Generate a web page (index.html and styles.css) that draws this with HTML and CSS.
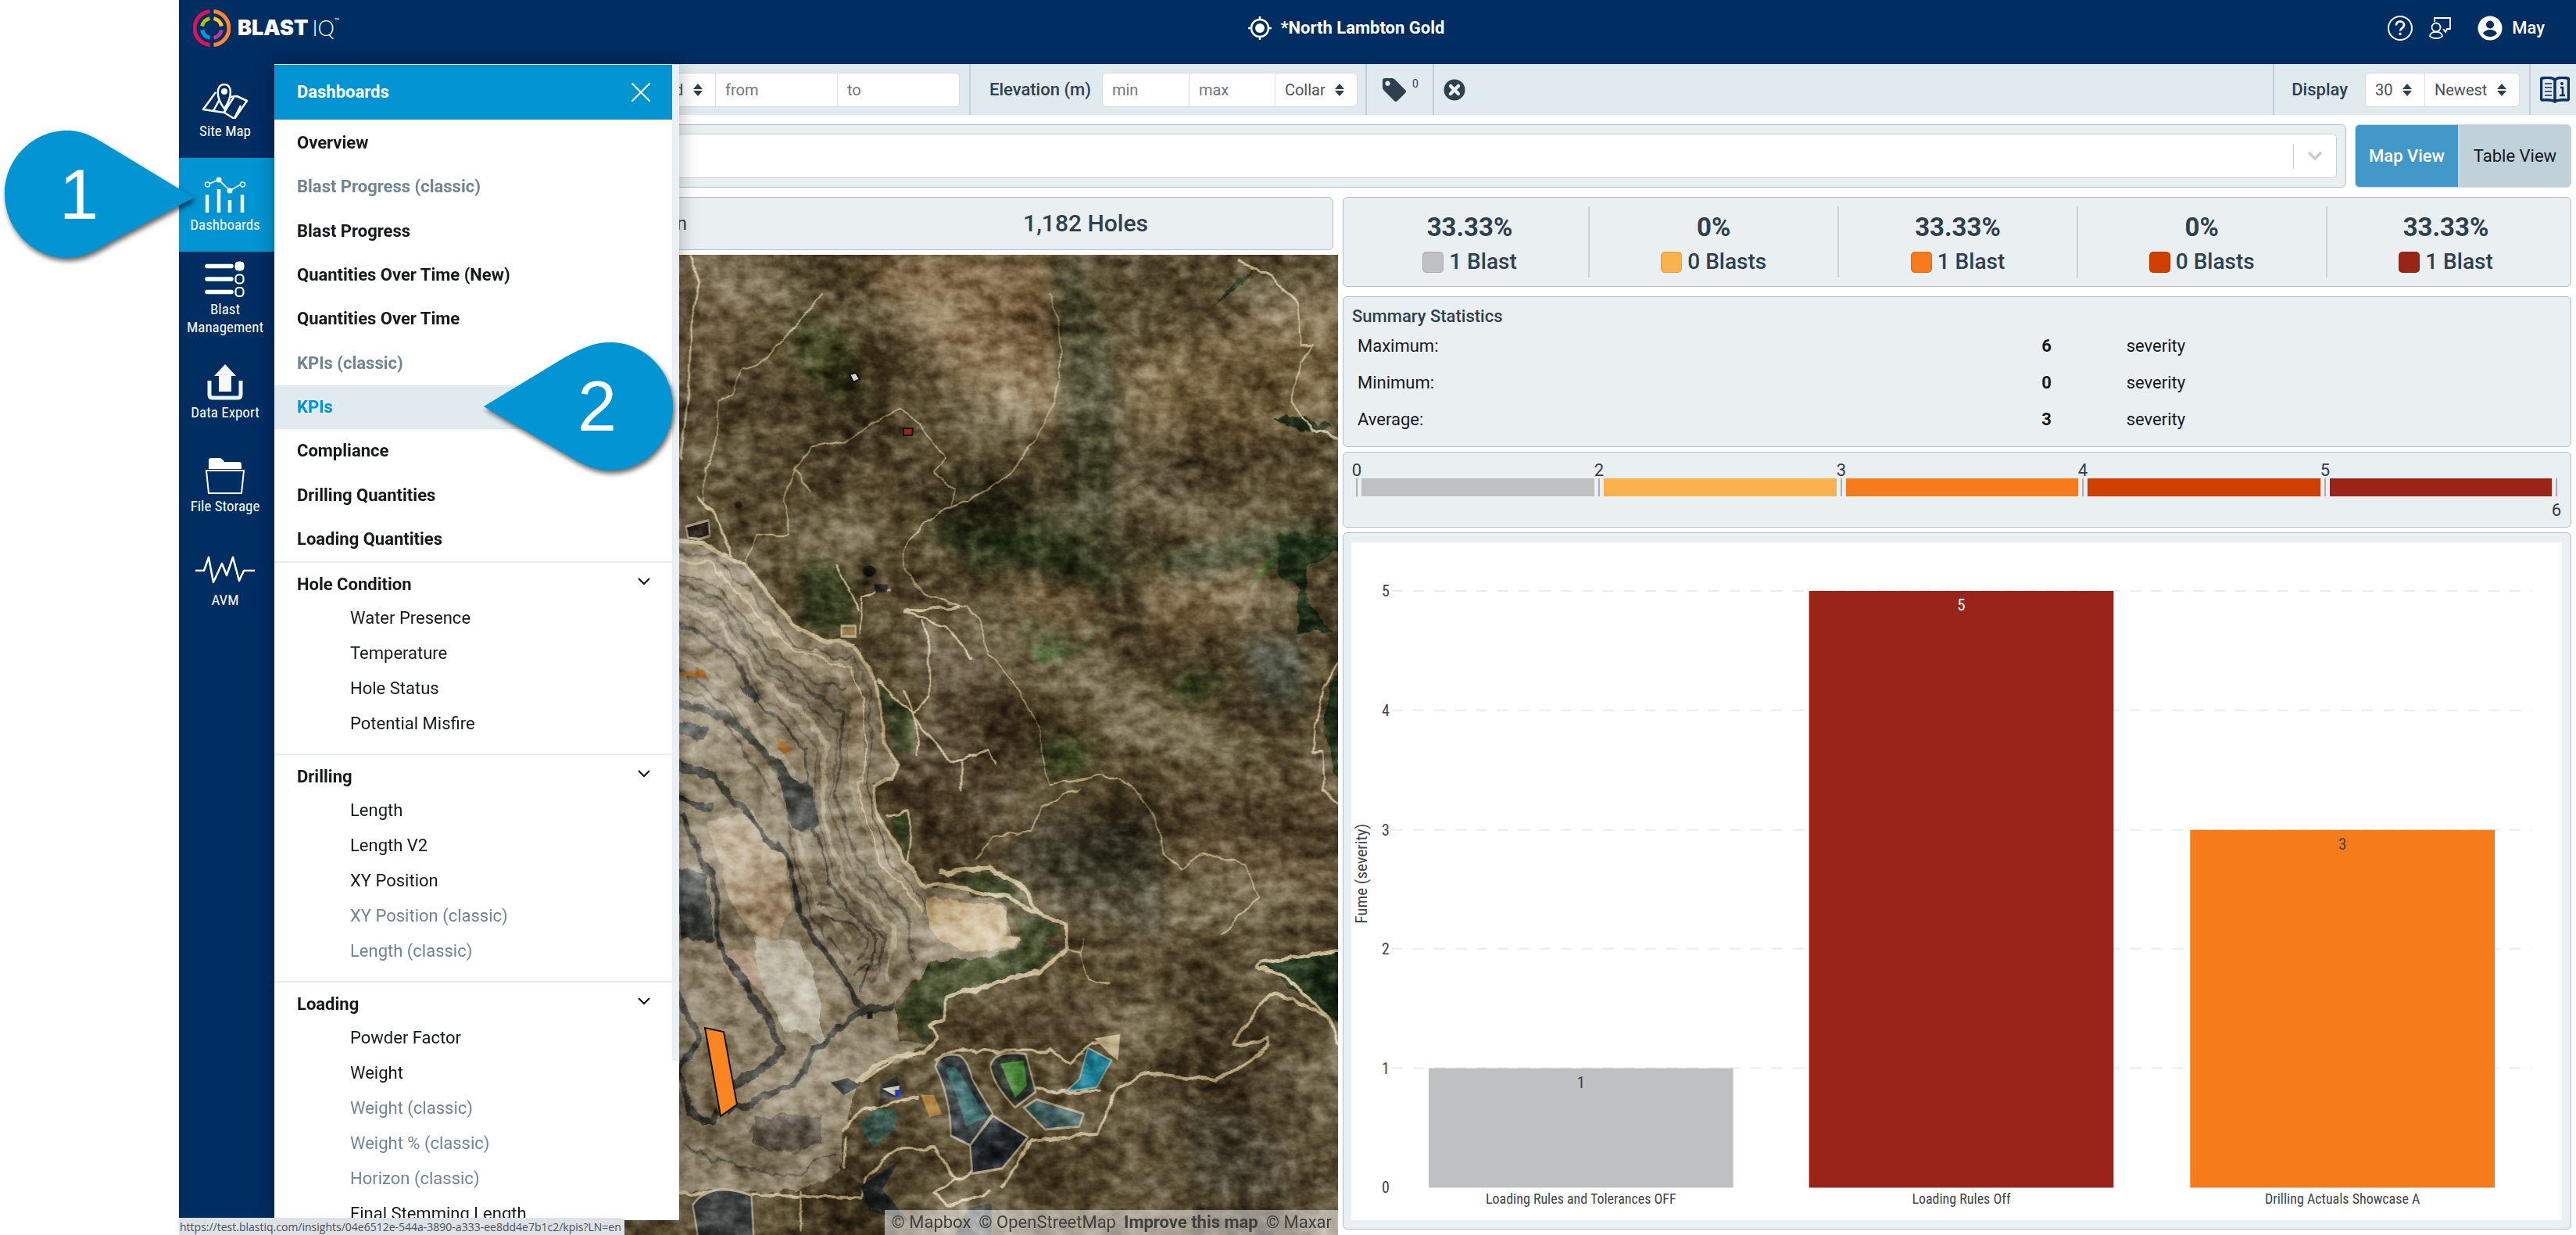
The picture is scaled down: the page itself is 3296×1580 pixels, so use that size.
FILE: index.html
```html
<!DOCTYPE html>
<html lang="en">
<head>
<meta charset="utf-8">
<title>BlastIQ – Dashboards</title>
<link rel="stylesheet" href="styles.css">
</head>
<body>
<div class="app">
  <header class="topbar">
    <a class="brand" href="#" aria-label="BlastIQ">
      <svg class="brand-mark" viewBox="0 0 48 48" fill="none">
        <g stroke-width="5">
          <path d="M21.500 2.600A21.500 21.500 0 0 0 21.500 45.400" stroke="#e3115c"/>
          <path d="M26.500 2.600A21.500 21.500 0 0 1 26.500 45.400" stroke="#f98432"/>
          <path d="M21.500 11.600A12.500 12.500 0 0 0 11.600 21.500" stroke="#b5c100"/>
          <path d="M26.500 11.600A12.500 12.500 0 0 1 36.400 21.500" stroke="#ffc425"/>
          <path d="M21.500 36.400A12.500 12.500 0 0 1 11.600 26.500" stroke="#0b9ad6"/>
          <path d="M26.500 36.400A12.500 12.500 0 0 0 36.400 26.500" stroke="#b9399f"/>
        </g>
      </svg>
      <span class="brand-name">BLAST</span><span class="brand-iq">IQ</span><sup class="brand-tm">™</sup>
    </a>
    <div class="site">
      <svg class="icon-30" viewBox="0 0 30 30" fill="none" stroke="#fff"><circle cx="15" cy="15" r="11" stroke-width="2.500"/><circle cx="15" cy="15" r="6" fill="#fff" stroke="none"/><path d="M15 0v5M15 25v5M0 15h5M25 15h5" stroke-width="2.500"/></svg>
      <span>*North Lambton Gold</span>
    </div>
    <div class="account">
      <button class="plain" aria-label="Help"><svg class="icon-34" viewBox="0 0 34 34" fill="none" stroke="#fff"><circle cx="17" cy="17" r="15" stroke-width="2"/><path d="M12 13.500c0-7 10-6.500 10-.5 0 4-5 4-5 7.500" stroke-width="2.800"/><circle cx="17" cy="24.500" r="1.300" fill="#fff"/></svg></button>
      <button class="plain" aria-label="Feedback"><svg class="icon-28" viewBox="0 0 28 28" fill="none" stroke="#fff" stroke-width="1.800"><path d="M7 6V1h20v14h-4l-2 4-3-4"/><circle cx="9" cy="13" r="5.500"/><path d="M1 24c1-7 15-7 16 0-3 4-13 4-16 0Z"/></svg></button>
      <button class="plain user"><svg class="icon-32" viewBox="0 0 32 32"><circle cx="16" cy="16" r="15.500" fill="#fff"/><circle cx="16" cy="11.500" r="5" fill="#002d62"/><path d="M7 22.500c3-6 15-6 18 0-4 6-14 6-18 0Z" fill="#002d62"/></svg><span>May</span></button>
    </div>
  </header>

  <div class="body">
    <nav class="rail" aria-label="Main">
      <a href="#"><svg class="rail-icon" viewBox="0 0 60 46" fill="none" stroke="#fff" stroke-width="2.500" stroke-linejoin="round"><path d="M18 12 2 34l13 2 14 2 13 8 16-23-13-6-8 1M15 36l8-15M29 38l4-7M29 33c-12-16-10-31 0-31s11 15 0 31ZM42 45l8-16M29 37l13-20"/><circle cx="29" cy="11" r="4" fill="#fff" stroke="none"/></svg><span>Site Map</span></a>
      <a href="#" class="current"><svg class="rail-icon" viewBox="0 0 60 46" fill="none" stroke="#eef5f9"><path d="M7 23v23M22 16v30M36 30v16M52 23v23" stroke-width="4.500"/><path d="M10 9 22 4l14 14 14-8" stroke-width="1.800"/><circle cx="7.500" cy="10" r="3" stroke-width="1.500"/><circle cx="52.500" cy="10" r="3" stroke-width="1.500"/><circle cx="22" cy="4" r="3.500" fill="#fff" stroke="none"/><circle cx="36" cy="18" r="3.500" fill="#fff" stroke="none"/></svg><span>Dashboards</span></a>
      <a href="#"><svg class="rail-icon" viewBox="0 0 60 46" fill="none" stroke="#fff"><path d="M7 6.500h31M7 23h31M7 39.500h31" stroke-width="5.500" stroke-linecap="round"/><rect x="43" y="1" width="11" height="11" rx="4" fill="#fff"/><rect x="43.500" y="17.500" width="10" height="11" rx="4" stroke-width="2.200"/><rect x="43.500" y="34" width="10" height="11" rx="4" stroke-width="2.200"/></svg><span>Blast Management</span></a>
      <a href="#"><svg class="rail-icon" viewBox="0 0 60 46" fill="none"><path d="M10 21v18q0 4 4 4h32q4 0 4-4V21" stroke="#eef5f9" stroke-width="5"/><path d="m30 0 14 15h-6v20H22V15h-6Z" fill="#f3f8fa"/></svg><span>Data Export</span></a>
      <a href="#"><svg class="rail-icon" viewBox="0 0 60 46" fill="none"><path d="M9 14V3q0-3 3-3h11q3 0 6 5h19q3 0 3 3v6Z" fill="#fff"/><path d="M6 16h48l-3 29H9Z" stroke="#fff" stroke-width="2"/></svg><span>File Storage</span></a>
      <a href="#"><svg class="rail-wave" viewBox="0 0 76 46" fill="none" stroke="#fff" stroke-width="2.500" stroke-linejoin="round"><path d="M0 24h11L17 7l6 32L34 15l6 15L48 7l8 30 6-13h14"/></svg><span>AVM</span></a>
    </nav>

    <main class="content">
      <form class="toolbar">
        <div class="tool dates">
          <div class="fields">
            <div class="pick"><select aria-label="Date type"><option>Fired</option></select><svg class="sort" viewBox="0 0 12 16"><path d="m6 0 6 7H0ZM6 16 0 9h12Z"/></svg></div>
            <input class="date" aria-label="from" placeholder="from"><input class="date" aria-label="to" placeholder="to">
          </div>
        </div>
        <div class="tool">
          <label class="tool-label" for="elevation-min">Elevation (m)</label>
          <div class="fields">
            <input class="level" id="elevation-min" placeholder="min"><input class="level" aria-label="max" placeholder="max">
            <div class="pick"><select aria-label="Elevation reference"><option>Collar</option></select><svg class="sort" viewBox="0 0 12 16"><path d="m6 0 6 7H0ZM6 16 0 9h12Z"/></svg></div>
          </div>
        </div>
        <div class="tool tags"><button type="button" class="plain tag" aria-label="Tags"><svg class="icon-30" viewBox="0 0 30 30"><path fill-rule="evenodd" d="M0 3q0-3 3-3h9q2 0 4 2l13 13q2 2 0 4L19 29q-2 2-4 0L2 16q-2-2-2-4ZM6.500 3.500a3.200 3.200 0 1 0 .1 0Z" fill="#2e404d"/></svg><span class="count">0</span></button></div>
        <div class="tool clear"><button type="button" class="plain" aria-label="Clear filters"><svg class="icon-28" viewBox="0 0 28 28"><circle cx="14" cy="14" r="13.500" fill="#2e404d"/><path d="m9 9 10 10M19 9 9 19" stroke="#e9f0f3" stroke-width="4.500" stroke-linecap="round"/></svg></button></div>
        <div class="tool display">
          <label class="tool-label" for="display-count">Display</label>
          <div class="fields">
            <div class="pick"><select id="display-count"><option>30</option></select><svg class="sort" viewBox="0 0 12 16"><path d="m6 0 6 7H0ZM6 16 0 9h12Z"/></svg></div>
            <div class="pick"><select aria-label="Order"><option>Newest</option></select><svg class="sort" viewBox="0 0 12 16"><path d="m6 0 6 7H0ZM6 16 0 9h12Z"/></svg></div>
          </div>
        </div>
        <div class="tool guide"><button type="button" class="plain" aria-label="Guide"><svg class="icon-book" viewBox="0 0 38 34" fill="none" stroke="#0a2f66"><path d="M19 4Q14 0 3 2 1.500 2 1.500 4v24q0 2 2 2 11-1 15.500 2 4.500-3 15.500-2 2 0 2-2V4q0-2-1.500-2Q24 0 19 4v27" stroke-width="3.500"/><path d="M6 9h9M6 14h9M6 19h9M6 24h9" stroke-width="1.500"/><path d="M26 14h3v10M25 24h7" stroke-width="2.500"/><circle cx="28" cy="9" r="2" fill="#0a2f66" stroke="none"/></svg></button></div>
      </form>

      <div class="filter-row">
        <div class="card filter">
          <div class="combo"><input aria-label="Filter blasts"><button class="plain combo-open" aria-label="Open list"><svg class="icon-18" viewBox="0 0 18 12" fill="none" stroke="#ccc" stroke-width="3.500" stroke-linecap="round"><path d="m2 2 7 7 7-7"/></svg></button></div>
        </div>
        <div class="views"><button class="view on">Map View</button><button class="view">Table View</button></div>
      </div>

      <div class="columns">
        <section class="map-col">
          <div class="card totals"><span class="metric">Fume comparison</span><strong class="holes">1,182 Holes</strong></div>
          <div class="map">
            <svg class="map-art" viewBox="351 326 1361 1254" preserveAspectRatio="xMaxYMin slice" aria-hidden="true">
              <defs>
                <filter id="ground" class="noise" x="0" y="0" width="100%" height="100%"><feTurbulence type="fractalNoise" baseFrequency=".006 .009" numOctaves="6" seed="8"/><feColorMatrix values="1.300 .5 0 0 -.4  1.300 .5 0 0 -.4  1.300 .5 0 0 -.4  0 0 0 0 1"/></filter>
                <filter id="grain" class="noise" x="0" y="0" width="100%" height="100%"><feTurbulence type="fractalNoise" baseFrequency=".05 .07" numOctaves="4" seed="23"/><feColorMatrix values="1.200 .6 0 0 -.4  1.200 .6 0 0 -.4  1.200 .6 0 0 -.4  0 0 0 0 1"/></filter>
                <filter id="rough" x="-5%" y="-5%" width="110%" height="110%"><feTurbulence type="fractalNoise" baseFrequency=".025" numOctaves="4" seed="5"/><feDisplacementMap in="SourceGraphic" scale="24" xChannelSelector="R" yChannelSelector="G"/></filter>
                <filter id="wind" x="-5%" y="-5%" width="110%" height="110%"><feTurbulence type="fractalNoise" baseFrequency=".03" numOctaves="2" seed="11"/><feDisplacementMap in="SourceGraphic" scale="14" xChannelSelector="R" yChannelSelector="G"/></filter>
                <filter id="soft" x="-20%" y="-20%" width="140%" height="140%"><feGaussianBlur stdDeviation="18"/></filter>
              </defs>
              <rect x="351" y="326" width="1361" height="1254" fill="#594c31"/>
              <g transform="translate(860 320) scale(.5485 .8036)">
                <g filter="url(#soft)">
                  <path d="M400 0h480l160 180-120 120-250-90Z" fill="#806b46"/>
                  <path d="M10 10h250l-60 150-190 200Z" fill="#67593c"/>
                  <path d="M1040 180 1560 60v200l-200 50-280-20Z" fill="#786543"/>
                  <path d="M1040 320 1300 420 1200 440 1060 400Z" fill="#776a50"/>
                  <path d="M800 510 1020 560 960 600 780 560ZM1100 520 1400 480 1350 580 1120 640Z" fill="#7a6644"/>
                  <path d="M280 90 400 130 470 250 370 230 280 180Z" fill="#3b3e1f"/>
                  <path d="M880 0h60l100 180v260l100 60-300-20-250-70 100-60 220 50Z" fill="#46442b"/>
                  <path d="M560 430 900 440 1080 530 1000 540 700 500Z" fill="#2f381c"/>
                  <path d="M1060 500 1540 430 1560 480 1200 530Z" fill="#2c351b"/>
                  <path d="M300 490 430 520 420 610 310 600Z" fill="#414928"/>
                  <path d="M540 600 720 640 820 780 780 900 560 940 500 830 620 760Z" fill="#483a25"/>
                  <path d="M870 780 980 790 960 830 870 830ZM800 600 940 620 900 660ZM1200 670 1320 690 1160 720Z" fill="#3b4d24"/>
                  <path d="M1330 620 1470 620 1480 720 1380 730Z" fill="#494b3e"/>
                  <path d="M860 900 1130 900 1150 1100 900 1040 760 980Z" fill="#4a4431"/>
                  <path d="M1100 860 1560 850v180l-340-40Z" fill="#6a5a3c"/>
                  <path d="M1250 1180 1500 1260 1540 1550 1040 1550 1040 1400Z" fill="#594c31"/>
                  <path d="M640 1220 1100 1180 1000 1260 620 1260Z" fill="#463823"/>
                  <path d="M1200 1370 1350 1380 1460 1490 1230 1500Z" fill="#6b644f"/>
                </g>
                <g filter="url(#rough)">
                  <path d="M1420 450 1560 455V480L1480 500V560L1540 610H1450L1470 540 1410 510ZM1370 1135 1560 1115V1230L1440 1170ZM1400 270 1450 262 1540 280 1470 290ZM1260 90 1330 40 1360 30 1300 70 1270 85ZM1540 680 1560 670V860L1520 760Z" fill="#1f2a13"/>
                  <path d="M1380 500 1400 480 1400 510 1330 540ZM830 630 930 640 1010 580 950 640 850 655Z" fill="#2f5f25" opacity=".5"/>
                  <path d="M590 1140 830 1095 910 1110 850 1145 660 1185 630 1220 600 1260 520 1220ZM640 1000 760 990 830 1045ZM790 1050 910 1080 830 1120ZM500 900 555 905 550 970ZM480 690 560 740 570 800 520 800Z" fill="#3c4527"/>
                  <path d="M-700 455 10 462 70 466 170 500 240 560 300 605 350 622 420 628 460 665 480 700 495 780 525 820 515 840 470 852 475 890 540 970 590 1015 640 1010 780 1040 785 1085 812 1098 800 1112 700 1130 600 1135 520 1200 530 1260 600 1260 540 1285 440 1320 400 1400 390 1470 300 1500-700 1500Z" fill="#8f836b"/>
                  <g fill="none" stroke-linejoin="round">
                    <path d="M10 500 120 520 200 590 300 650 400 665 430 720 430 800 440 880 520 1000 580 1050" stroke="#bfb193" stroke-width="36" opacity=".5"/>
                    <path d="M10 530 120 560 220 650 340 710 400 740 380 860 430 970 550 1060 560 1130" stroke="#665e4d" stroke-width="7"/>
                    <path d="M10 560 110 590 200 680 320 750 360 790 350 900 400 1000 520 1080 500 1160" stroke="#afa389" stroke-width="9"/>
                    <path d="M10 575 120 615 200 700 315 770 340 800 335 905 385 1005 500 1090 470 1170" stroke="#746b59" stroke-width="5"/>
                    <path d="M10 590 130 640 200 720 310 790 320 900 370 1010 480 1100 440 1180" stroke="#595346" stroke-width="6"/>
                    <path d="M10 640 120 690 190 760 280 830 290 920 340 1040 420 1100" stroke="#a79c83" stroke-width="12"/>
                    <path d="M10 665 100 705 180 775 265 850 275 940 325 1060 410 1130M10 690 90 720 170 800 240 870" stroke="#675f4f" stroke-width="5"/>
                    <path d="M10 515 110 535 190 605 310 680 410 700M10 480 100 490 200 560 290 630 420 650 460 700 470 780 450 850 500 960 590 1040M10 545 115 575 210 665 330 730 385 765 365 880 415 985 540 1070" stroke="#716754" stroke-width="4"/>
                    <path d="M10 490 100 505 190 575 290 640 410 660 445 710 455 790 435 865 485 975 580 1045" stroke="#cfc1a3" stroke-width="4"/>
                    <path d="M340 1040 420 1050 500 1100 480 1140 420 1150M350 1060 420 1070 460 1105 430 1130M180 1400 240 1375 320 1380 350 1410 280 1440M30 1430 130 1450 260 1475 380 1440" stroke="#645c4b" stroke-width="4"/>
                    <path d="M10 720 110 740 210 790 280 850" stroke="#4b4b41" stroke-width="14"/>
                  </g>
                  <path d="M80 910 190 890 260 970 280 1050 230 1110 150 1060 110 980Z" fill="#b29f83"/>
                  <path d="M190 1090 300 1100 350 1200 350 1260 260 1240 200 1170Z" fill="#b8b29f"/>
                  <path d="M110 1120 180 1110 220 1180 140 1160Z" fill="#ae967f"/>
                  <path d="M250 840 330 850 340 920 280 920ZM10 750 90 760 80 780 10 770ZM10 980 80 990 100 1100 20 1100ZM160 690 210 710 190 725Z" fill="#454642"/>
                  <path d="M190 1380 350 1380 350 1420 250 1440 190 1415Z" fill="#62594c"/>
                  <path d="M590 1030 780 1045 780 1085 812 1098 790 1112 680 1115 600 1080Z" fill="#c3ae87"/>
                </g>
                <g fill="none" stroke="#45453e" stroke-width="12" stroke-linejoin="round" filter="url(#rough)">
                  <path d="M10 820 100 840 180 900 270 970 300 1060 420 1180 450 1215M10 870 90 890M20 900 100 1010 110 1110 190 1190 260 1270 200 1310 120 1330M10 1180 60 1250 20 1310 40 1370 100 1390 110 1370"/>
                  <path d="M130 1370 290 1330 330 1270 440 1215 520 1200"/>
                </g>
                <g fill="none" stroke="#c3b48f" stroke-width="5" stroke-linejoin="round" stroke-linecap="round" filter="url(#wind)">
                  <path d="M10 462 70 466 170 500 240 560 300 605 350 622 420 628 460 665 480 700 495 780 525 820 515 840 470 852 475 890 540 970 590 1015 640 1010 780 1030 920 1075 920 1115 860 1145 640 1190 630 1225 600 1235 620 1255 590 1275 490 1290 430 1320" stroke-width="7"/>
                  <path d="M625 992 740 985 810 1010 855 1052" stroke-width="8"/>
                  <path d="M40 10 65 50 45 120 38 230 20 330M60 395 100 420 140 485"/>
                  <g stroke="#b0a07a" stroke-width="3">
                    <path d="M350 70 210 180 160 190 140 230 110 240 100 320 75 350 75 400M175 495 195 453 275 453 260 400 285 350 325 385M285 350 325 315 400 305 535 248 640 330 610 355 660 380 650 410"/>
                    <path d="M880 70Q910 120 905 190 900 260 800 345 750 385 640 412 540 450 540 490 545 530 600 550L690 570Q720 580 735 640 800 680 830 730 860 750 860 800L880 852 1000 835 1060 850Q1130 880 1145 960L1190 985 1240 960 1340 980 1370 1030 1280 1090"/>
                    <path d="M710 970 750 935 840 925 860 890 950 855M920 1115 950 1120 970 1160 1020 1170M960 1100 950 1120"/>
                  </g>
                  <path d="M545 575 670 567M545 575 640 600 700 650M580 590 600 630 600 710 560 740 480 685M540 700 575 770 570 805M560 740 650 815 740 795 755 820M675 815V860M385 505 435 570M440 610 445 550 510 540M500 900 550 897 560 920 550 975" stroke-width="4"/>
                  <path d="M1553 1115 1370 1135Q1350 1145 1400 1148L1440 1160 1530 1220 1430 1190Q1390 1180 1370 1205L1310 1260Q1300 1275 1390 1255 1400 1275 1270 1322L1100 1310 1040 1335 990 1408 840 1418 770 1490M1530 1220 1553 1260" stroke-width="6"/>
                  <path d="M1320 20 1400 40 1460 90 1465 150 1495 150 1465 180 1445 240 1490 285 1553 300M1553 660 1520 700 1500 760 1495 800 1515 800 1520 860 1553 880" stroke-width="4"/>
                  <path d="M615 1290 650 1275 880 1275 930 1295 980 1260 1040 1260M440 1320 520 1290M850 1330 880 1340 1000 1340M10 1500 440 1510 450 1480 520 1430 610 1430 660 1480 720 1460M660 1480 610 1500 640 1520 740 1500M300 1500V1560M400 1400 440 1370 570 1350M405 1410 400 1460"/>
                </g>
                <path d="M985 1255 1045 1248 1040 1290 1020 1280Z" fill="#bda984"/>
                <g stroke="#a99c80" stroke-width="4" stroke-linejoin="round">
                  <path d="M614 1300Q625 1275 670 1282 690 1290 700 1320L748 1375 695 1425 650 1410Q650 1350 614 1300Z" fill="#2d3437"/>
                  <path d="M748 1378 830 1412 770 1462 700 1470 695 1425Z" fill="#22272b"/>
                  <path d="M742 1300Q750 1272 825 1280L848 1340 800 1365Q750 1330 742 1300Z" fill="#30352d"/>
                  <path d="M820 1365 850 1352 960 1375 950 1395 870 1400Z" fill="#385553"/>
                  <path d="M48 1520Q90 1480 185 1505L190 1570H60Z" fill="#292d2c"/>
                  <path d="M32 440 85 430 88 455 65 460 37 458Z" fill="#1f1b18"/>
                </g>
                <path d="M638 1305Q660 1290 680 1320L735 1380 685 1395Q665 1345 638 1305Z" fill="#33615f"/>
                <path d="M765 1295 820 1290 828 1330 800 1350Z" fill="#488438"/>
                <path d="M970 1270 1025 1290 990 1333 918 1340 950 1320Z" fill="#1a788e" stroke="#8fa492" stroke-width="3"/>
                <path d="M435 1390 480 1365 525 1370 520 1400 470 1430Z" fill="#486558"/>
                <path d="M580 1345 610 1345 630 1375 600 1380Z" fill="#ae8440"/>
                <path d="M485 1330 525 1315 535 1345 485 1355ZM370 1325 410 1318 440 1330 400 1345ZM440 1490 530 1450 490 1495 550 1545 460 1530ZM690 1525 745 1518 745 1568H660Z" fill="#2c302f"/>
                <path d="M490 1335 530 1330V1350Z" fill="#d8d4c8"/><path d="M520 1337h14v12h-14Z" fill="#2d49b5"/>
                <path d="M245 775 280 795 265 803 248 795ZM20 672 75 668 80 680 25 678Z" fill="#ad712e"/>
                <path d="M395 598 428 598 428 615 395 615Z" fill="#937c44" stroke="#beae8b" stroke-width="4"/>
                <path d="M455 1212h12v12h-12ZM470 532 505 532 500 545 475 545Z" fill="#25261f"/>
                <ellipse cx="460" cy="511" rx="15" ry="9" fill="#1e2415"/><ellipse cx="155" cy="406" rx="8" ry="6" fill="#2b2419"/>
              </g>
              <rect class="texture" x="351" y="326" width="1361" height="1254" filter="url(#ground)"/>
              <rect class="texture fine" x="351" y="326" width="1361" height="1254" filter="url(#grain)"/>
              <g stroke="#111" stroke-width="2">
                <path d="m902 1315 24 5 17 93-21 15Z" fill="#f98420"/>
                <path d="m1087 479 8-2 5 8-8 4Z" fill="#cfcfcf"/>
                <path d="M1156 548h12l-1 9h-11Z" fill="#9b2417"/>
              </g>
            </svg>
            <p class="credits"><a href="#">© Mapbox</a> <a href="#">© OpenStreetMap</a> <a href="#" class="improve">Improve this map</a> <a href="#">© Maxar</a></p>
          </div>
        </section>

        <section class="stats-col">
          <div class="card shares">
            <div class="share"><strong>33.33%</strong><span><i class="swatch s0"></i>1 Blast</span></div>
            <div class="share"><strong>0%</strong><span><i class="swatch s2"></i>0 Blasts</span></div>
            <div class="share"><strong>33.33%</strong><span><i class="swatch s3"></i>1 Blast</span></div>
            <div class="share"><strong>0%</strong><span><i class="swatch s4"></i>0 Blasts</span></div>
            <div class="share"><strong>33.33%</strong><span><i class="swatch s5"></i>1 Blast</span></div>
          </div>
          <div class="card summary">
            <h2>Summary Statistics</h2>
            <table>
              <tr><th scope="row">Maximum:</th><td class="value">6</td><td>severity</td></tr>
              <tr><th scope="row">Minimum:</th><td class="value">0</td><td>severity</td></tr>
              <tr><th scope="row">Average:</th><td class="value">3</td><td>severity</td></tr>
            </table>
          </div>
          <div class="card scale">
            <div class="step"><span class="from">0</span><i class="s0"></i></div>
            <div class="step"><span class="from">2</span><i class="s2"></i></div>
            <div class="step"><span class="from">3</span><i class="s3"></i></div>
            <div class="step"><span class="from">4</span><i class="s4"></i></div>
            <div class="step last"><span class="from">5</span><i class="s5"></i><span class="end">6</span></div>
          </div>
          <div class="card chart">
            <svg class="chart-art" viewBox="0 0 1550 868" role="img" aria-label="Fume (severity) by blast">
              <g class="grid"><path d="M52 62H1512M52 215H1512M52 368H1512M52 520H1512M52 673H1512"/></g>
              <rect x="99" y="673" width="390" height="153" fill="#bfc0c2"/>
              <rect x="586" y="62" width="390" height="764" fill="#9b2418"/>
              <rect x="1074" y="368" width="390" height="458" fill="#f57b1b"/>
              <g class="axis" text-anchor="end"><text x="49" y="69">5</text><text x="49" y="222">4</text><text x="49" y="375">3</text><text x="49" y="527">2</text><text x="49" y="680">1</text><text x="49" y="833">0</text></g>
              <g class="axis names" text-anchor="middle"><text x="294" y="847">Loading Rules and Tolerances OFF</text><text x="781" y="847">Loading Rules Off</text><text x="1269" y="847">Drilling Actuals Showcase A</text></g>
              <g class="axis marks" text-anchor="middle"><text x="294" y="698">1</text><text x="781" y="87" class="light">5</text><text x="1269" y="393">3</text></g>
              <text class="axis marks" text-anchor="middle" transform="translate(20 424) rotate(-90)">Fume (severity)</text>
            </svg>
          </div>
        </section>
      </div>
    </main>

    <aside class="panel">
      <div class="panel-head"><h1>Dashboards</h1><button class="plain" aria-label="Close"><svg class="icon-24" viewBox="0 0 24 24" stroke="#fff" stroke-width="2"><path d="m0 0 24 24M24 0 0 24"/></svg></button></div>
      <div class="panel-scroll">
        <ul class="pages">
          <li><a href="#">Overview</a></li>
          <li><a href="#" class="classic">Blast Progress (classic)</a></li>
          <li><a href="#">Blast Progress</a></li>
          <li><a href="#">Quantities Over Time (New)</a></li>
          <li><a href="#">Quantities Over Time</a></li>
          <li><a href="#" class="classic">KPIs (classic)</a></li>
          <li><a href="#" class="hover">KPIs</a></li>
          <li><a href="#">Compliance</a></li>
          <li><a href="#">Drilling Quantities</a></li>
          <li><a href="#">Loading Quantities</a></li>
        </ul>
        <section class="group">
          <button class="plain group-head"><span>Hole Condition</span><svg class="icon-16" viewBox="0 0 16 10" fill="none" stroke="#111" stroke-width="2"><path d="m1 1 7 7 7-7"/></svg></button>
          <ul><li><a href="#">Water Presence</a></li><li><a href="#">Temperature</a></li><li><a href="#">Hole Status</a></li><li><a href="#">Potential Misfire</a></li></ul>
        </section>
        <section class="group">
          <button class="plain group-head"><span>Drilling</span><svg class="icon-16" viewBox="0 0 16 10" fill="none" stroke="#111" stroke-width="2"><path d="m1 1 7 7 7-7"/></svg></button>
          <ul><li><a href="#">Length</a></li><li><a href="#">Length V2</a></li><li><a href="#">XY Position</a></li><li><a href="#" class="classic">XY Position (classic)</a></li><li><a href="#" class="classic">Length (classic)</a></li></ul>
        </section>
        <section class="group">
          <button class="plain group-head"><span>Loading</span><svg class="icon-16" viewBox="0 0 16 10" fill="none" stroke="#111" stroke-width="2"><path d="m1 1 7 7 7-7"/></svg></button>
          <ul><li><a href="#">Powder Factor</a></li><li><a href="#">Weight</a></li><li><a href="#" class="classic">Weight (classic)</a></li><li><a href="#" class="classic">Weight % (classic)</a></li><li><a href="#" class="classic">Horizon (classic)</a></li><li><a href="#">Final Stemming Length</a></li></ul>
        </section>
      </div>
      <div class="scrollbar"></div>
    </aside>
  </div>
</div>

<div class="status">https://test.blastiq.com/insights/04e6512e-544a-3890-a333-ee8dd4e7b1c2/kpis?LN=en</div>

<div class="callout one"><svg viewBox="0 0 244 166"><path d="M243 87 139 24C116 10 102 1 81 1 37 1 1 37 1 82s36 82 80 82c21 0 38-10 58-22Z" fill="#0294d3"/></svg><span>1</span></div>
<div class="callout two"><svg viewBox="0 0 244 166"><path d="M1 83 105 20C128 8 142 1 163 1c44 0 80 37 80 82s-36 82-80 82c-21 0-38-9-58-21Z" fill="#0294d3"/></svg><span>2</span></div>
</body>
</html>
```
FILE: styles.css
```css
* { box-sizing: border-box; }

body {
  margin: 0;
  background: #fff;
  color: #16191c;
  font: 22px/28px Roboto, sans-serif;
}

a { color: inherit; text-decoration: none; }
ul { list-style: none; margin: 0; padding: 0; }
h1, h2, p { margin: 0; }
svg { display: block; flex: none; }
button, input, select { font: inherit; color: inherit; }

.plain {
  display: flex;
  align-items: center;
  padding: 0;
  border: 0;
  background: none;
}

.icon-16 { width: 16px; height: 10px; }
.icon-18 { width: 18px; height: 12px; }
.icon-24 { width: 24px; height: 24px; }
.icon-28 { width: 28px; height: 28px; }
.icon-30 { width: 30px; height: 30px; }
.icon-32 { width: 32px; height: 32px; }
.icon-34 { width: 34px; height: 34px; }
.icon-book { width: 38px; height: 34px; }

.app {
  display: flex;
  flex-direction: column;
  min-height: 100vh;
  margin-left: 229px;
}

/* Top bar */
.topbar {
  display: grid;
  grid-template-columns: 1fr auto 1fr;
  align-items: center;
  height: 82px;
  padding: 0 40px 10px 18px;
  background: #002d62;
  color: #fff;
}
.brand { display: flex; align-items: center; }
.brand-mark { width: 48px; height: 48px; margin-right: 9px; }
.brand-name { font: 900 27px/30px Inter, sans-serif; }
.brand-iq { margin-left: 5px; font: 300 27px/30px Lato, sans-serif; }
.brand-tm { align-self: flex-start; font: 8px/28px Lato, sans-serif; }
.site { display: flex; align-items: center; gap: 12px; margin-right: 58px; font-weight: 700; }
.account { display: flex; align-items: center; justify-content: flex-end; gap: 20px; }
.user { gap: 12px; margin-left: 14px; font-weight: 500; }

/* Left rail */
.body { position: relative; display: flex; flex: 1; }
.rail { width: 122px; flex: none; background: #002d62; }
.rail a {
  display: flex;
  flex-direction: column;
  align-items: center;
  justify-content: center;
  gap: 4px;
  height: 120px;
  padding: 0 10px 0 6px;
  color: #fff;
  font: 19px/23px "Roboto Condensed", Roboto, sans-serif;
  text-align: center;
}
.rail .current { background: #0294d3; }
.rail-icon { width: 60px; height: 46px; }
.rail-wave { width: 76px; height: 46px; }

.content { display: flex; flex: 1; flex-direction: column; min-width: 0; }

/* Filter toolbar */
.toolbar { display: flex; height: 65px; background: #e1eaee; color: #2e404d; }
.tool {
  display: flex;
  align-items: center;
  gap: 14px;
  padding: 0 10px 0 24px;
  border-right: 2px solid #bfd0d9;
}
.dates { width: 891px; padding-right: 12px; justify-content: flex-end; }
.tool-label { font-weight: 500; }
.fields {
  display: flex;
  height: 44px;
  border: 1px solid #d3dbe0;
  border-radius: 6px;
  background: #fff;
  font-size: 20px;
  overflow: hidden;
}
.fields > * + * { border-left: 1px solid #dde2e6; }
.fields input {
  min-width: 0;
  padding: 0 12px;
  border-width: 0 0 0 1px;
  border-style: solid;
  border-color: #dde2e6;
}
.fields input:first-child { border-left: 0; }
.fields .date { width: 156px; }
.fields .level { width: 110px; }
.fields ::placeholder { color: #6b7780; opacity: 1; }
.pick { display: flex; align-items: center; padding: 0 16px 0 12px; gap: 12px; }
.pick select { padding: 0; border: 0; background: none; color: #495057; appearance: none; }
.sort { width: 12px; height: 16px; fill: #2e404d; }
.tags { padding: 0 18px 0 20px; }
.tag { gap: 8px; }
.count { align-self: flex-start; font-size: 14px; line-height: 14px; }
.clear { padding: 0 12px; border: 0; }
.display { margin-left: auto; padding: 0 12px 0 22px; border-left: 2px solid #bfd0d9; }
.display .tool-label { margin-right: 8px; }
.guide { padding: 0 8px 0 12px; border: 0; }

/* Blast filter and view switch */
.card { border: 1px solid #b1bfcd; border-radius: 6px; background: #eaeff2; }
.filter-row { display: flex; gap: 11px; padding: 12px 6px 12px 6px; }
.filter { flex: 1; padding: 11px; }
.combo {
  display: flex;
  align-items: center;
  height: 57px;
  border: 1px solid #ccc;
  border-radius: 5px;
  background: #fff;
}
.combo input { flex: 1; border: 0; background: none; }
.combo-open { height: 32px; padding: 0 18px; border-left: 1px solid #ccc; }
.views { display: grid; grid-template-columns: 133px 144px; }
.view { padding: 0; border: 1px solid #c6d5de; background: #c0d1da; color: #16191c; border-radius: 0 6px 6px 0; }
.view.on { background: #4299c9; color: #fff; font-weight: 500; border-radius: 6px 0 0 6px; }

.columns { display: grid; grid-template-columns: 1361fr 1572fr; gap: 6px; flex: 1; padding: 0 6px 6px 0; }

/* Map */
.map-col { display: flex; flex-direction: column; gap: 6px; margin-bottom: -6px; }
.totals { display: grid; grid-template-columns: 521px 1fr; align-items: center; height: 68px; margin: 0 6px; color: #2e404d; }
.metric { justify-self: end; font-size: 24px; }
.holes { justify-self: center; margin-left: 194px; font-size: 30px; font-weight: 500; }
.map { position: relative; flex: 1; overflow: hidden; }
.map-art { position: absolute; inset: 0; width: 100%; height: 100%; }
.noise { color-interpolation-filters: sRGB; }
.texture { mix-blend-mode: soft-light; opacity: .8; }
.texture.fine { opacity: .7; }
.credits {
  position: absolute;
  right: 0;
  bottom: 0;
  display: flex;
  gap: 10px;
  padding: 2px 8px;
  background: rgba(255, 255, 255, .5);
  color: #3f3f3c;
}
.improve { font-weight: 700; }

/* Statistics */
.stats-col { display: flex; flex-direction: column; color: #2e404d; }
.shares { display: flex; height: 115px; padding: 11px 8px 11px 10px; }
.share { display: flex; flex: 1 1 auto; flex-direction: column; align-items: center; gap: 14px; }
.share + .share { border-left: 2px solid #cdd2d5; }
.share strong { margin-top: 11px; font-size: 33px; line-height: 32px; font-weight: 700; }
.share span { display: flex; align-items: center; gap: 7px; font-size: 28px; line-height: 28px; font-weight: 500; }
.swatch { width: 27px; height: 27px; border: 1px solid rgba(0, 0, 0, .1); border-radius: 5px; }
.s0 { background: #bfc0c2; }
.s2 { background: #fbb24c; }
.s3 { background: #f57b1b; }
.s4 { background: #cf3f00; }
.s5 { background: #9b2418; }

.summary { height: 193px; margin-top: 12px; padding: 11px 11px 9px; }
.summary h2 { font-size: 22px; line-height: 28px; font-weight: 500; }
.summary table { width: 100%; border-spacing: 0; table-layout: fixed; color: #16191c; }
.summary th, .summary td { width: 36%; height: 47px; padding: 0; font-weight: 400; text-align: left; }
.summary th { width: 57%; padding-left: 7px; }
.summary .value { width: 7%; font-weight: 700; }

.scale {
  display: grid;
  grid-template-columns: 310fr 310fr 309fr 310fr 298fr;
  height: 97px;
  margin-top: 6px;
  padding: 33px 17px 0 16px;
}
.step { position: relative; height: 23px; padding: 0 5px; border-left: 2px solid #aaaeb0; }
.step.last { border-right: 2px solid #aaaeb0; }
.step i { display: block; height: 23px; }
.from, .end { position: absolute; width: 20px; line-height: 22px; text-align: center; }
.from { left: -11px; top: -21px; }
.end { right: -11px; top: 30px; }

.chart { margin-top: 6px; padding: 12px 11px 11px 10px; }
.chart-art { width: 100%; height: auto; background: #fff; }
.grid { stroke: #ececec; stroke-width: 2; stroke-dasharray: 14 13; }
.axis { font: 20px "Roboto Condensed", Roboto, sans-serif; fill: #414548; }
.names { font-size: 18px; }
.marks { font-size: 21px; }
.marks .light { fill: #fff; }

/* Dashboards menu */
.panel {
  position: absolute;
  top: 0;
  bottom: 19px;
  left: 122px;
  display: grid;
  grid-template: 72px minmax(0, 1fr) / 509px 9px;
  width: 518px;
  border-top: 1px solid #dfe7ec;
  background: #fff;
  box-shadow: 0 0 24px rgba(0, 0, 0, .3);
  contain: size;
}
.panel-head {
  display: flex;
  align-items: center;
  justify-content: space-between;
  height: 70px;
  padding: 0 28px 0 29px;
  background: #0294d3;
  color: #fff;
}
.panel-head h1 { font-size: 22px; line-height: 28px; font-weight: 700; }
.panel-scroll { grid-row: 2; overflow: hidden; }
.scrollbar { grid-area: 1 / 2 / 3 / 3; height: 1274px; background: #e9eff2; }
.pages { display: grid; grid-auto-rows: 1fr; height: 563px; font-size: 22px; font-weight: 700; }
.pages a { display: flex; align-items: center; height: 100%; padding-left: 29px; }
.pages .hover { background: #e1eaee; color: #0294d3; }
.classic { color: #6f8594; }
.group { padding-bottom: 16px; border-top: 2px solid #e8ecef; }
.group-head { justify-content: space-between; width: 100%; height: 48px; padding: 8px 28px 0 29px; font-weight: 700; }
.group-head svg { margin-bottom: 8px; }
.group li { padding-left: 97px; line-height: 45px; }

.status {
  position: fixed;
  bottom: 0;
  left: 229px;
  height: 22px;
  padding: 0 4px 0 1px;
  border-top-right-radius: 5px;
  background: #dee1e6;
  color: #4b4f54;
  font: 14px/24px "Open Sans", sans-serif;
}

/* Numbered callouts over the page */
.callout { position: absolute; width: 244px; height: 166px; filter: drop-shadow(2px 4px 3px rgba(0, 0, 0, .6)); }
.callout svg { width: 244px; height: 166px; }
.callout span {
  position: absolute;
  inset: 0;
  color: #fff;
  font: 90px/166px "Liberation Sans", sans-serif;
  text-align: center;
}
.one { left: 5px; top: 166px; }
.one span { right: 52px; }
.two { left: 618px; top: 437px; }
.two span { left: 48px; }
```
